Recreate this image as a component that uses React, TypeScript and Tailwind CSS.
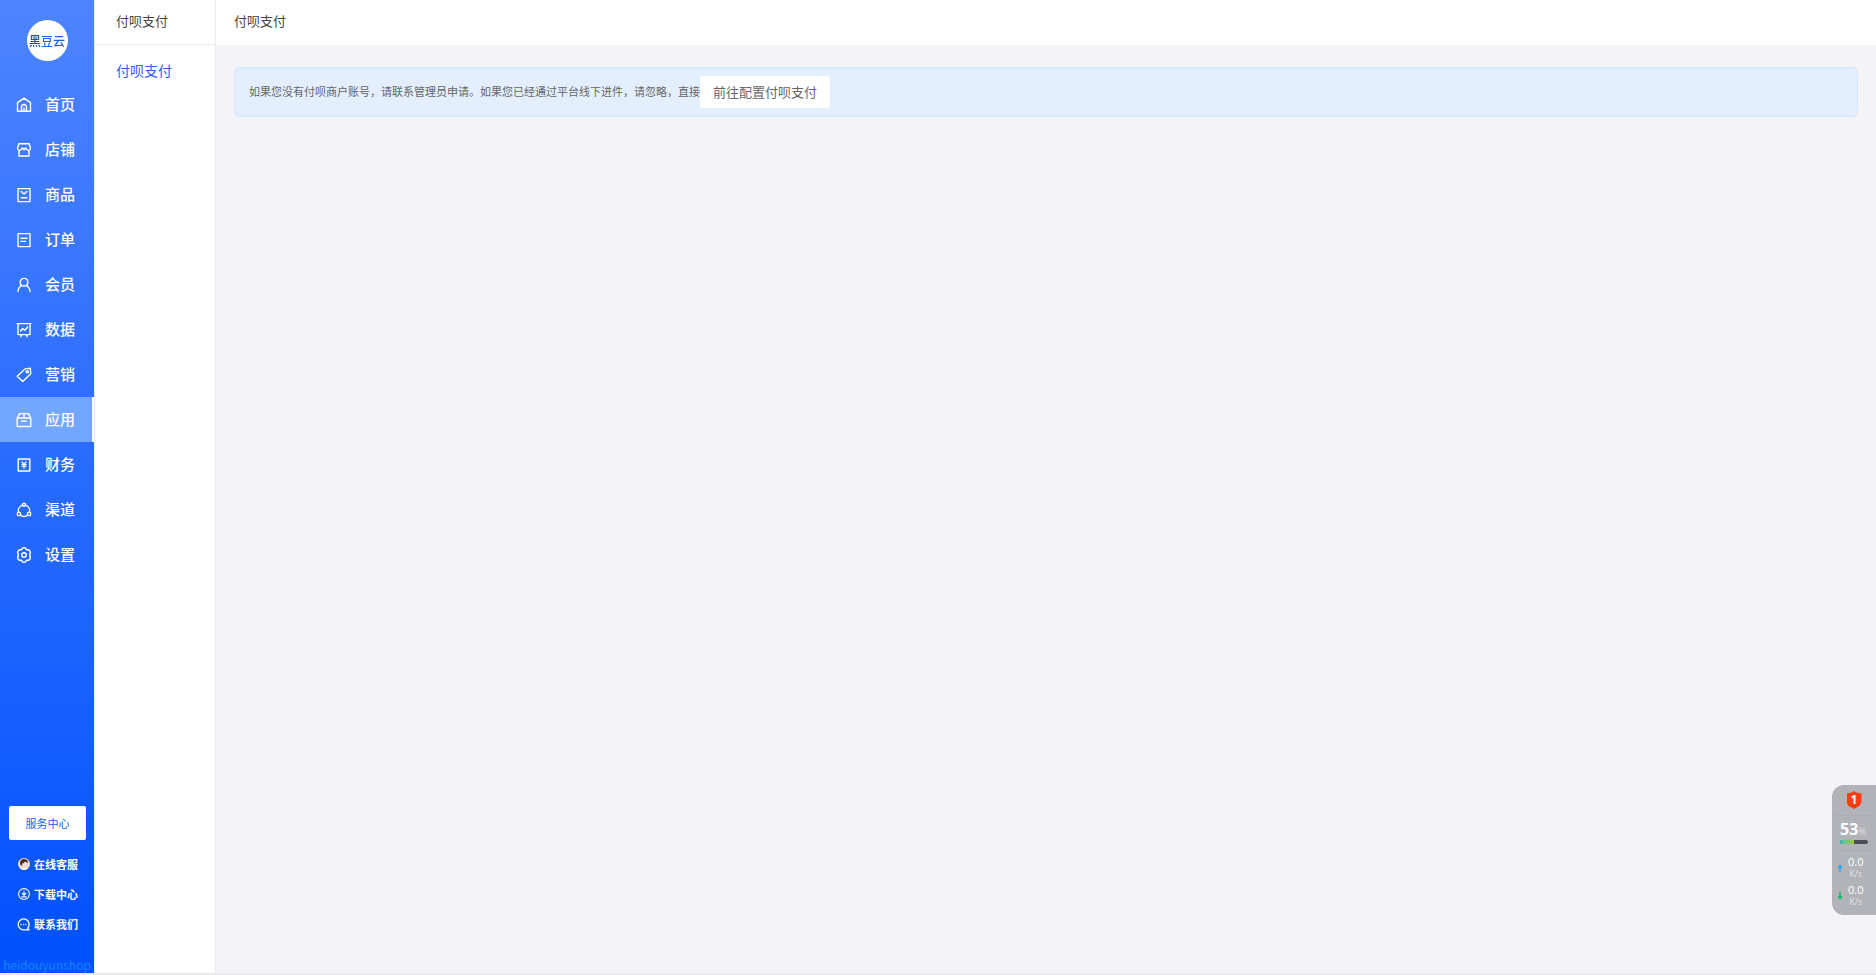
import React from "react";

type IconProps = { children: React.ReactNode; size?: string };

function Icon({ children, size = "size-4" }: IconProps) {
  return (
    <svg
      viewBox="0 0 16 16"
      className={`${size} shrink-0`}
      fill="none"
      stroke="currentColor"
      strokeWidth="1.4"
      strokeLinejoin="round"
      strokeLinecap="round"
      aria-hidden="true"
    >
      {children}
    </svg>
  );
}

const NAV: { label: string; icon: React.ReactNode; active?: boolean }[] = [
  {
    label: "首页",
    icon: <path d="M5.500 14.300h-4V5.600L8 1.200l6.500 4.400v8.700h-4V10a2.500 2.500 0 0 0-5 0zM8 11v3.300M5.500 14.300h5" />,
  },
  {
    label: "店铺",
    icon: <path d="M2.800 1.700h10.400l1.300 4.500a2 2 0 0 1-3.400 1.600L9.500 6 8 7.800 6.500 6 4.900 7.800a2 2 0 0 1-3.400-1.600zM3 9v5h10V9" />,
  },
  {
    label: "商品",
    icon: <path d="M2 1.600h12v13H2zM5.200 4.500L8 7l2.800-2.500M5.200 10.800h5.600" />,
  },
  { label: "订单", icon: <path d="M2 1.600h12v13H2zM5 6.200h6M5 9.400h4.500" /> },
  {
    label: "会员",
    icon: <path d="M8 1.400c2.200 0 3.800 1.600 3.800 3.800S10.200 9 8 9 4.200 7.400 4.200 5.200 5.800 1.400 8 1.400zM5.800 8.400C3.500 9.600 2.200 11.500 2 14.500M10.200 8.400c2.300 1.200 3.600 3.100 3.800 6.100" />,
  },
  {
    label: "数据",
    icon: <path d="M1 1.600h14M2 1.600v11h12v-11M4.500 9l2.200-2.500 2 1.700 3-3.200M5.800 12.600l-1 2M10.200 12.600l1 2" />,
  },
  {
    label: "营销",
    icon: (
      <>
        <path d="M9 1.900l5.400-.6.300 5.400-8 7.800L1.200 9.300z" />
        <circle cx="11.300" cy="4.800" r="1.100" />
      </>
    ),
  },
  {
    label: "应用",
    active: true,
    icon: <path d="M1.200 6h13.600v8.500H1.200zM1.200 6l2.400-4.400h8.800L14.800 6M8 1.600V6M5.800 9.200h4.400" />,
  },
  {
    label: "财务",
    icon: (
      <>
        <path d="M2.200 2h11.600v12H2.200z" />
        <path d="M6 5l2 2.300L10 5M8 7.300v4M6 7.700h4M6 9.500h4" strokeWidth="1.200" />
      </>
    ),
  },
  {
    label: "渠道",
    icon: (
      <>
        <path d="M6.300 3.200A6 6 0 0 0 2.500 10M9.700 3.200a6 6 0 0 1 3.800 6.800M4.600 13.400a6 6 0 0 0 6.800 0" />
        <circle cx="8" cy="2.700" r="1.500" />
        <circle cx="2.900" cy="12" r="1.700" />
        <circle cx="13.100" cy="12" r="1.700" />
      </>
    ),
  },
  {
    label: "设置",
    icon: (
      <>
        <path d="M6.400 1.200Q8 .4 9.600 1.200L10.400 2.700 12.800 2.800Q14.300 3.800 14.400 5.400L13.700 6.800Q14.500 8 13.700 9.200L14.400 10.600Q14.300 12.200 12.800 13.200L10.400 13.300 9.600 14.800Q8 15.600 6.400 14.800L5.600 13.300 3.200 13.200Q1.700 12.200 1.600 10.600L2.300 9.200Q1.500 8 2.300 6.800L1.600 5.400Q1.700 3.800 3.200 2.800L5.600 2.700z" />
        <circle cx="8" cy="8" r="2.300" />
      </>
    ),
  },
];

function Logo() {
  return (
    <div className="mx-auto mt-5 flex size-[41px] shrink-0 items-center justify-center rounded-full bg-white">
      <span className="whitespace-nowrap bg-linear-to-r from-[#1d3f9e] via-[#1f6df0] to-[#2456c0] bg-clip-text text-xs font-medium leading-4 text-transparent">
        黑豆云
      </span>
    </div>
  );
}

function Avatar() {
  return (
    <svg viewBox="0 0 12 12" className="size-3 shrink-0" aria-hidden="true">
      <circle cx="6" cy="6" r="6" fill="#f6dccf" />
      <path d="M2.500 7C1 3.500 3.500.8 6.300 1c2.700.2 3.900 2 3.600 4C9 4.800 8 4.200 7 3.600 6.500 5 5.300 5.200 4.300 5.600c-.3.900-.2 1.500 0 2.400z" fill="#4a2d29" />
      <path d="M3 11c1.500-1.500 4.500-1.500 6 0a6 6 0 0 1-6 0z" fill="#fff" />
    </svg>
  );
}

function Sidebar() {
  return (
    <aside className="flex w-[94px] shrink-0 flex-col bg-linear-to-b from-[#4d84ff] via-[#266aff] to-[#0050ff] text-white">
      <Logo />
      <nav className="mt-[21px] flex flex-col">
        {NAV.map((item) => (
          <a
            key={item.label}
            href="#"
            className={
              item.active
                ? "flex h-[45px] items-center gap-[13px] border-r-2 border-white bg-[#72a6ff] pl-4 text-[15px] font-medium"
                : "flex h-[45px] items-center gap-[13px] pl-4 text-[15px] font-medium"
            }
          >
            <Icon>{item.icon}</Icon>
            {item.label}
          </a>
        ))}
      </nav>
      <div className="mt-auto flex flex-col">
        <button type="button" className="mr-2 ml-[9px] h-[34px] rounded-xs bg-white text-[11px] text-[#1260ff]">
          服务中心
        </button>
        <div className="mt-[9px] flex flex-col text-[11px] font-bold">
          <a href="#" className="flex h-[30px] items-center gap-1 pl-[18px]">
            <Avatar />
            在线客服
          </a>
          <a href="#" className="flex h-[30px] items-center gap-1 pl-[18px]">
            <Icon size="size-3">
              <circle cx="8" cy="8" r="7.200" />
              <path d="M8 4v5M5.500 7.200L8 9.700l2.500-2.500M5 11.800h6" />
            </Icon>
            下载中心
          </a>
          <a href="#" className="flex h-[30px] items-center gap-1 pl-[17px]">
            <Icon size="size-[13px]">
              <path d="M14.800 14.500H8A6.700 6.700 0 1 1 13 12.500zM4.800 8h.2M8 8h.2M11 8h.2" strokeWidth="1.600" />
            </Icon>
            联系我们
          </a>
        </div>
        <p className="mt-[18px] text-center text-xs leading-4 text-[#1487ff]">heidouyunshop</p>
      </div>
    </aside>
  );
}

function Speed({ up = false }: { up?: boolean }) {
  return (
    <div className="flex h-6 items-center gap-[5px] pl-0.5">
      <svg viewBox="0 0 6 8" className="h-2 w-1.5 shrink-0" aria-hidden="true">
        {up ? (
          <path d="M3 0l2.500 4H3.700v4H2.300V4H.5z" fill="#25a5f5" />
        ) : (
          <path d="M3 8l2.500-4H3.700V0H2.300v4H.5z" fill="#12b866" />
        )}
      </svg>
      <p className="flex flex-col text-center text-[11px] leading-3">
        0.0<span className="text-[9px] leading-3 text-[#e0e1e4]">K/s</span>
      </p>
    </div>
  );
}

function Monitor() {
  return (
    <section
      aria-label="系统监控"
      className="absolute right-0 bottom-[60px] flex w-11 flex-col rounded-l-xl bg-[#b1b3b9] px-[3px] font-['Open_Sans','Noto_Sans',sans-serif] text-white"
    >
      <div className="flex h-[31px] items-center justify-center border-b border-[#a6adb3]">
        <div className="flex h-[18px] w-[15px] items-center justify-center bg-[#f63e12] text-xs font-bold [clip-path:polygon(50%_0,65%_9%,100%_14%,100%_62%,88%_82%,50%_100%,12%_82%,0_62%,0_14%,35%_9%)]">
          1
        </div>
      </div>
      <div className="h-[35px] border-b border-[#a6adb3] pt-1 pl-[5px]">
        <p className="flex items-baseline text-base leading-[18px] font-bold">
          53<span className="text-[10px] font-normal text-[#dcdde0]">%</span>
        </p>
        <div className="flex h-1 w-7 overflow-hidden rounded-full bg-[#4b4d59]">
          <div className="w-1/2 bg-linear-to-r from-[#2fc0ae] to-[#a1c928]" />
        </div>
      </div>
      <div className="flex flex-col gap-1 pt-[5px] pb-[7px]">
        <Speed up />
        <Speed />
      </div>
    </section>
  );
}

export default function App() {
  return (
    <div className="relative flex min-h-screen flex-col bg-[#e9e9eb] pb-0.5 font-['Noto_Sans_CJK_SC',sans-serif] text-[#444]">
      <div className="flex flex-1">
        <Sidebar />
        <aside className="w-[122px] shrink-0 border-x border-[#ebebed] bg-white">
          <h2 className="flex h-[45px] items-center border-b border-[#ebebed] pb-0.5 pl-[21px] text-[13px]">付呗支付</h2>
          <a href="#" className="mt-3.5 flex h-[21px] items-center pl-[21px] text-sm text-[#2f5bff]">
            付呗支付
          </a>
        </aside>
        <main className="flex flex-1 flex-col bg-[#f3f3f8]">
          <h1 className="flex h-[45px] items-center bg-white pb-[3px] pl-[18px] text-[13px]">付呗支付</h1>
          <div className="mx-[18px] mt-[22px] flex h-[50px] items-center rounded-md border border-[#d3e6fd] bg-[#e3effe] pl-3.5 text-[11px] text-[#666]">
            <p className="pb-0.5">如果您没有付呗商户账号，请联系管理员申请。如果您已经通过平台线下进件，请忽略，直接</p>
            <button type="button" className="h-8 rounded-[3px] bg-white px-[13px] text-[13px] text-[#666]">
              前往配置付呗支付
            </button>
          </div>
        </main>
      </div>
      <Monitor />
    </div>
  );
}
